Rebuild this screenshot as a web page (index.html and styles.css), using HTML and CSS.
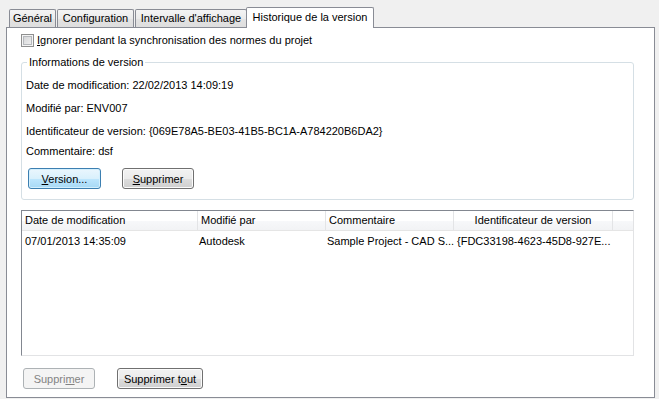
FILE: index.html
```html
<!DOCTYPE html>
<html lang="fr">
<head>
<meta charset="utf-8">
<title>Historique de la version</title>
<link rel="stylesheet" href="styles.css">
</head>
<body>
<div class="window">
  <div class="tabs">
    <div class="tab t1">Général</div>
    <div class="tab t2">Configuration</div>
    <div class="tab t3">Intervalle d'affichage</div>
    <div class="tab sel">Historique de la version</div>
  </div>
  <div class="panel">
    <label class="check"><span class="box"></span><span><u>I</u>gnorer pendant la synchronisation des normes du projet</span></label>
    <fieldset class="group">
      <legend>Informations de version</legend>
      <div class="line">Date de modification: 22/02/2013 14:09:19</div>
      <div class="line">Modifié par: ENV007</div>
      <div class="line tight">Identificateur de version: {069E78A5-BE03-41B5-BC1A-A784220B6DA2}</div>
      <div class="line">Commentaire: dsf</div>
      <div class="btnrow">
        <button class="btn default w73"><u>V</u>ersion...</button>
        <button class="btn w72"><u>S</u>upprimer</button>
      </div>
    </fieldset>
    <div class="list">
      <div class="lhead">
        <div class="hc c1">Date de modification</div>
        <div class="hc c2">Modifié par</div>
        <div class="hc c3">Commentaire</div>
        <div class="hc c4 center">Identificateur de version</div>
        <div class="hc filler"></div>
      </div>
      <div class="lrow">
        <div class="cell c1">07/01/2013 14:35:09</div>
        <div class="cell c2 p1">Autodesk</div>
        <div class="cell c3 p1">Sample Project - CAD S...</div>
        <div class="cell c4">{FDC33198-4623-45D8-927E...</div>
      </div>
    </div>
    <div class="bottom">
      <button class="btn disabled w72">Suppri<u>m</u>er</button>
      <button class="btn w86">Supprimer t<u>o</u>ut</button>
    </div>
  </div>
</div>
</body>
</html>
```

FILE: styles.css
```css
html, body {
  margin: 0;
  padding: 0;
}
body {
  background: #f0f0f0;
  font: 11px "Liberation Sans", Arial, sans-serif;
  color: #000;
  width: 659px;
  height: 399px;
  overflow: hidden;
}
.window {
  padding: 7px 0 0 6px;
}
.tabs {
  display: flex;
  align-items: flex-end;
  height: 20px;
  padding-left: 3px;
}
.tab {
  box-sizing: border-box;
  height: 18px;
  line-height: 16px;
  border: 1px solid #898c95;
  border-bottom: none;
  border-radius: 2px 2px 0 0;
  background: linear-gradient(#f4f4f4, #ebebeb 50%, #e3e3e3 51%, #dedede);
  text-align: center;
  margin-right: 1px;
  white-space: nowrap;
}
.t1 { width: 47px; }
.t2 { width: 77px; }
.t3 { width: 112px; }
.tab.sel {
  width: 128px;
  height: 21px;
  margin-left: -2px;
  margin-bottom: -1px;
  line-height: 16px;
  padding-top: 1px;
  background: #fff;
  position: relative;
  z-index: 1;
}
.panel {
  box-sizing: border-box;
  width: 649px;
  height: 371px;
  background: #fff;
  border: 1px solid #898c95;
  padding: 0 20px 0 14px;
}
.check {
  display: flex;
  align-items: center;
  gap: 3px;
  margin-top: 6px;
  height: 13px;
  line-height: 13px;
}
.box {
  box-sizing: border-box;
  width: 13px;
  height: 13px;
  border: 1px solid #8e8f8f;
  background: linear-gradient(135deg, #cfd0d2, #f3f3f3);
  box-shadow: inset 0 0 0 1px #f4f4f4, inset 0 0 0 2px #b5b8bc;
}
.group {
  margin: 9px 0 0 0;
  padding: 10px 0 10px 4px;
  border: 1px solid #d5dfe5;
  border-radius: 3px;
  min-inline-size: 0;
}
.group legend {
  padding: 0 2px;
  margin-left: 1px;
  line-height: 13px;
}
.line {
  line-height: 13px;
  margin-bottom: 10px;
  white-space: nowrap;
}
.line.tight {
  margin-bottom: 7px;
}
.btnrow {
  display: flex;
  gap: 21px;
  padding-left: 2px;
}
.btn {
  box-sizing: border-box;
  height: 21px;
  padding: 0;
  font: inherit;
  color: #000;
  border: 1px solid #707070;
  border-radius: 3px;
  background: linear-gradient(#f2f2f2, #ebebeb 50%, #dddddd 51%, #cfcfcf);
  box-shadow: inset 0 0 0 1px #fbfbfb;
  line-height: 18px;
  text-align: center;
}
.btn.default {
  border-color: #3c7fb1;
  background: linear-gradient(#eaf6fd, #d9f0fc 50%, #bee6fd 51%, #a7d9f5);
  box-shadow: inset 0 0 0 1px #d3effd;
}
.btn.disabled {
  border-color: #adb2b5;
  background: #f4f4f4;
  color: #838383;
  box-shadow: none;
}
.w72 { width: 72px; }
.w73 { width: 73px; }
.w86 { width: 86px; }
.list {
  box-sizing: border-box;
  margin-top: 10px;
  height: 146px;
  border: 1px solid #e2e3e5;
  border-top-color: #828790;
  border-left-color: #828790;
}
.lhead {
  display: flex;
  height: 20px;
  box-sizing: border-box;
  border-bottom: 1px solid #e5e5e5;
  background: linear-gradient(#ffffff, #ffffff 50%, #f7f8fa 51%, #f2f3f5);
}
.hc {
  box-sizing: border-box;
  line-height: 19px;
  border-right: 1px solid #e3e4e6;
  padding-left: 3px;
  white-space: nowrap;
}
.c1 { width: 176px; }
.c2 { width: 128px; }
.c3 { width: 128px; }
.c4 { width: 159px; }
.hc.filler {
  flex: 1;
  border-right: none;
}
.center {
  text-align: center;
  padding-left: 0;
}
.lrow {
  display: flex;
  margin-top: 2px;
  line-height: 17px;
}
.cell {
  box-sizing: border-box;
  padding-left: 3px;
  white-space: nowrap;
  overflow: hidden;
}
.cell.p1 {
  padding-left: 1px;
}
.bottom {
  display: flex;
  gap: 22px;
  margin-top: 12px;
  padding-left: 2px;
}
u {
  text-decoration: underline;
  text-underline-offset: 1px;
}
```
